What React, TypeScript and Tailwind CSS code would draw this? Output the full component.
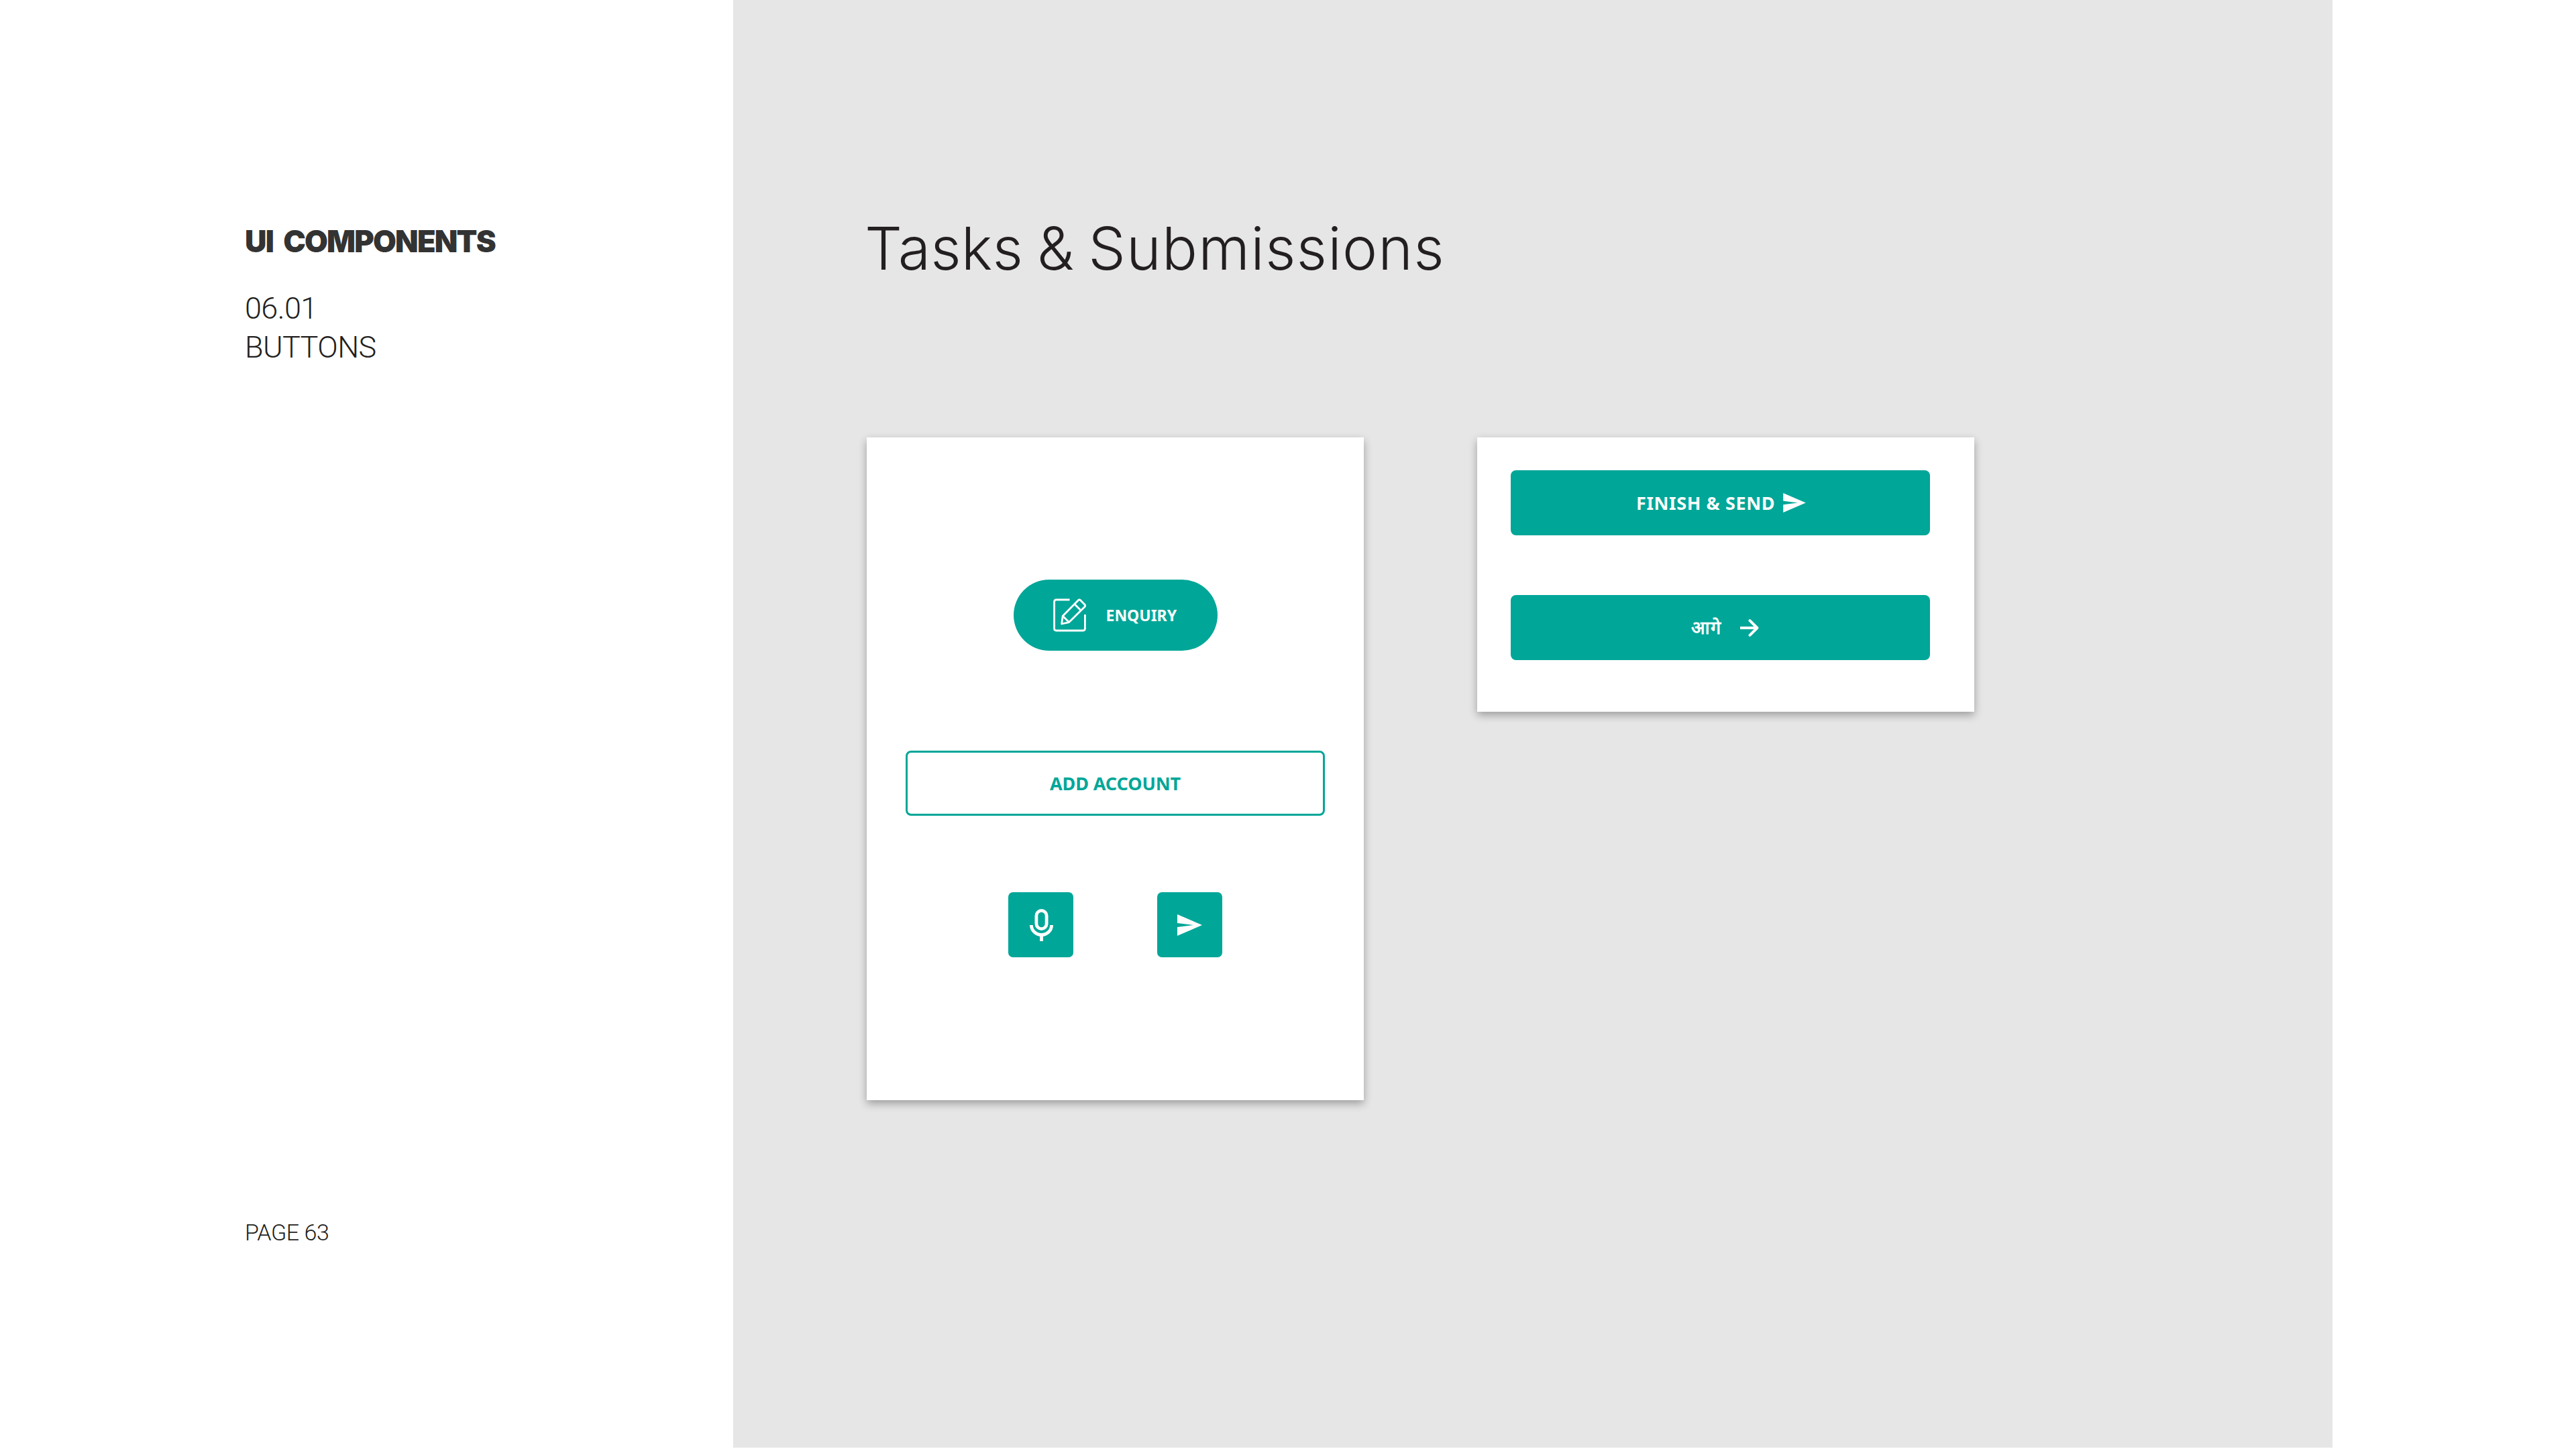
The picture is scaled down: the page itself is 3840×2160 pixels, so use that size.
import type { ReactNode } from "react";

function EditIcon() {
  return (
    <svg viewBox="0 0 49 50" className="h-[50px] w-[49px]" fill="none" stroke="currentColor" strokeWidth="2.8" strokeLinejoin="round">
      <path d="M24.5 2H4.5Q1.6 2 1.6 4.9V45Q1.6 48 4.5 48H44.5Q47.4 48 47.4 45V24" />
      <path d="M12.6 38L14.2 26.2L37.6 2.6Q39 1.3 40.4 2.6L47.2 9.4Q48.5 10.8 47.2 12.2L23.6 35.6L12.6 38Z" />
      <path d="M31.8 8.6L41.2 18M14.2 26.2L23.6 35.6" />
    </svg>
  );
}

function MicIcon() {
  return (
    <svg viewBox="0 0 35 48" className="h-12 w-[35px]" fill="none" stroke="currentColor" strokeWidth="4.8">
      <rect x="9.9" y="2.4" width="15.2" height="27.2" rx="7.6" />
      <path d="M2.4 24A15.1 14.6 0 0 0 32.6 24" />
      <path d="M17.5 38V48" />
    </svg>
  );
}

function SendIcon({ className }: { className: string }) {
  return (
    <svg viewBox="0 0 37 32" className={className} fill="currentColor">
      <path d="M0 0L37 16L0 32V19L24 16L0 13Z" />
    </svg>
  );
}

function ArrowIcon() {
  return (
    <svg viewBox="0 0 29 26" className="h-[26px] w-[29px]" fill="none" stroke="currentColor" strokeWidth="4">
      <path d="M0 13H26" />
      <path d="M14.5 2.2L25.4 13L14.5 23.8" strokeLinecap="round" strokeLinejoin="round" />
    </svg>
  );
}

function Card({ className, children }: { className: string; children: ReactNode }) {
  return (
    <div className={`flex w-[741px] flex-col bg-white shadow-[0_5px_12px_rgba(0,0,0,0.32)] ${className}`}>
      {children}
    </div>
  );
}

export default function App() {
  return (
    <div className="flex h-[2160px] w-[3840px] bg-white text-[#231f20]">
      <aside className="flex w-[1093px] shrink-0 flex-col pb-[306px] pl-[365px] pt-[337px]">
        <h2 className="font-['Inter',sans-serif] text-[45px] font-black leading-none tracking-[-1.8px] text-[#333333] [word-spacing:8px]">
          UI COMPONENTS
        </h2>
        <div className="mt-[49px] font-['Roboto',sans-serif] text-[45px] font-light leading-[57.5px]">
          <p className="tracking-[-0.6px]">06.01</p>
          <p className="tracking-[-0.6px]">BUTTONS</p>
        </div>
        <p className="mt-auto font-['Roboto',sans-serif] text-[34px] font-light leading-none tracking-[-0.4px]">PAGE 63</p>
      </aside>

      <main className="h-[2158px] w-[2384px] bg-[#e6e6e6] pt-[326px]">
        <h1 className="ml-[196px] font-['Inter',sans-serif] text-[88px] font-light leading-none tracking-[0.2px] [word-spacing:-4px]">
          Tasks &amp; <span className="tracking-[1.2px]">Submissions</span>
        </h1>

        <div className="ml-[199px] mt-[238px] flex items-start gap-[169px] font-['Noto_Sans',sans-serif] font-bold text-white">
          <Card className="h-[988px] items-center pt-[212px]">
            <button className="flex h-[106px] w-[304px] items-center rounded-full bg-[#00a698] pl-[59px]">
              <EditIcon />
              <span className="ml-[30px] text-[23px] leading-none">ENQUIRY</span>
            </button>
            <button className="mt-[149px] h-[97px] w-[625px] rounded-lg border-[3px] border-[#00a698] text-[27px] leading-none tracking-[-0.1px] text-[#00a698]">
              ADD ACCOUNT
            </button>
            <div className="mt-[114px] flex gap-[125px]">
              <button className="flex size-[97px] items-center justify-center rounded-[7px] bg-[#00a698] pl-px">
                <MicIcon />
              </button>
              <button className="flex size-[97px] items-center justify-center rounded-[7px] bg-[#00a698]">
                <SendIcon className="h-8 w-[37px]" />
              </button>
            </div>
          </Card>

          <Card className="h-[409px] gap-[89px] pl-[50px] pt-[49px]">
            <button className="flex h-[97px] w-[625px] items-center rounded-lg bg-[#00a698] pl-[187px] text-[27px] leading-none tracking-[0.6px]">
              FINISH &amp; SEND
              <SendIcon className="ml-3 h-[29px] w-[34px]" />
            </button>
            <button className="flex h-[97px] w-[625px] items-center rounded-lg bg-[#00a698] pl-[269px] text-[27px] leading-none">
              <span className="pb-[3px] font-['Open_Sans',sans-serif] tracking-[0.5px]">आगे</span>
              <span className="ml-[29px]">
                <ArrowIcon />
              </span>
            </button>
          </Card>
        </div>
      </main>
    </div>
  );
}
